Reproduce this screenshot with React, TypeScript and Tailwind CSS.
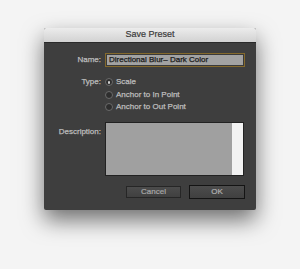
import React from 'react';

const font = { fontFamily: '"Liberation Sans", Arial, sans-serif' };

function Radio({ checked, label }: { checked?: boolean; label: string }) {
  return (
    <div className="flex h-[12.5px] items-center gap-[3px]">
      <div className="flex h-[8px] w-[8px] items-center justify-center rounded-full border border-[#6a6a6a] bg-[#2e2e2e]">
        {checked && <div className="h-[2.5px] w-[2.5px] rounded-full bg-[#d0d0d0]" />}
      </div>
      <span className="text-[8px] text-[#bdbdbd] [-webkit-text-stroke:0.25px_#bdbdbd]">{label}</span>
    </div>
  );
}

export default function App() {
  return (
    <div className="h-[269px] w-[300px] overflow-hidden bg-[#f4f4f4] pl-[44px] pt-[28px]" style={font}>
      <div className="flex h-[182px] w-[212px] flex-col overflow-hidden rounded-[2px] bg-[#3e3e3e] shadow-[0_10px_22px_rgba(0,0,0,0.55)]">
        <div className="flex h-[15px] items-center justify-center border-b border-[#2a2a2a] bg-gradient-to-b from-[#ececec] to-[#d2d2d2] text-[9px] text-[#3a3a3a] [-webkit-text-stroke:0.2px_#3a3a3a]">
          Save Preset
        </div>

        <div className="flex flex-1 flex-col pt-[10px]">
          <div className="flex h-[14px] items-center gap-[4px]">
            <span className="w-[57px] text-right text-[8px] text-[#bdbdbd] [-webkit-text-stroke:0.25px_#bdbdbd]">Name:</span>
            <div className="flex h-[14px] w-[140px] items-center border-[1.5px] border-[#84692c] bg-[#a2a2a2] px-[3px] text-[8px] text-[#1a1a1a] shadow-[inset_0_0_0_1px_#3a3a3a] [-webkit-text-stroke:0.25px_#1a1a1a]">
              Directional Blur– Dark Color
            </div>
          </div>

          <div className="mt-[9px] flex gap-[4px]">
            <span className="flex h-[12.5px] w-[57px] items-center justify-end text-[8px] text-[#bdbdbd] [-webkit-text-stroke:0.25px_#bdbdbd]">Type:</span>
            <div className="flex flex-col">
              <Radio checked label="Scale" />
              <Radio label="Anchor to In Point" />
              <Radio label="Anchor to Out Point" />
            </div>
          </div>

          <div className="mt-[8.5px] flex gap-[4px]">
            <span className="w-[57px] pt-[4px] text-right text-[8px] text-[#bdbdbd] [-webkit-text-stroke:0.25px_#bdbdbd]">Description:</span>
            <div className="flex h-[54px] w-[139px] border border-[#222] bg-[#a0a0a0]">
              <div className="flex-1" />
              <div className="w-[11px] bg-[#f2f2f2]" />
            </div>
          </div>

          <div className="mt-[9px] flex items-center justify-end gap-[8px] pr-[11px]">
            <div className="flex h-[12px] w-[55px] items-center justify-center border border-[#262626] bg-gradient-to-b from-[#4c4c4c] to-[#404040] text-[8px] text-[#a8a8a8] [-webkit-text-stroke:0.2px_#a8a8a8]">
              Cancel
            </div>
            <div className="flex h-[14px] w-[56px] items-center justify-center border-[1.5px] border-[#141414] bg-gradient-to-b from-[#4c4c4c] to-[#404040] text-[8px] text-[#b0b0b0] [-webkit-text-stroke:0.2px_#b0b0b0]">
              OK
            </div>
          </div>
        </div>
      </div>
    </div>
  );
}
